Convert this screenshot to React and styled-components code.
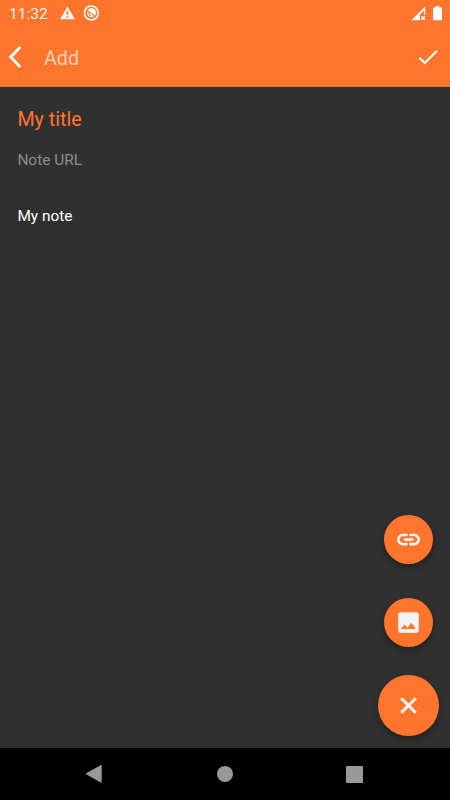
import React from 'react'
import styled, { createGlobalStyle } from "styled-components";

function App() {
  return (
    <>
      <GlobalStyle />
      <Screen>
        <Header>
          <StatusBar>
            <Clock>11:32</Clock>
            <WarningIcon />
            <BlockedIcon />
            <Spacer />
            <SignalIcon />
            <BatteryIcon />
          </StatusBar>
          <Toolbar>
            <IconButton aria-label="Back">
              <svg width="14" height="24" viewBox="0 0 14 24">
                <path d="M12.2 2 2.8 12 12.2 22" fill="none" stroke="#fff" strokeWidth="2.8" />
              </svg>
            </IconButton>
            <Heading>Add</Heading>
            <Spacer />
            <IconButton aria-label="Save">
              <MaterialIcon size={26} d="M9 16.17 4.83 12l-1.42 1.41L9 19 21 7l-1.41-1.41z" />
            </IconButton>
          </Toolbar>
        </Header>

        <Content>
          <Title>My title</Title>
          <NoteUrl>Note URL</NoteUrl>
          <Note>My note</Note>
          <Actions>
            <Fab aria-label="Add link">
              <MaterialIcon
                size={27}
                weight={0.3}
                d="M3.9 12c0-1.71 1.39-3.1 3.1-3.1h4V7H7c-2.76 0-5 2.24-5 5s2.24 5 5 5h4v-1.9H7c-1.71 0-3.1-1.39-3.1-3.1zM8 13h8v-2H8v2zm9-6h-4v1.9h4c1.71 0 3.1 1.39 3.1 3.1s-1.39 3.1-3.1 3.1h-4V17h4c2.76 0 5-2.24 5-5s-2.24-5-5-5z"
              />
            </Fab>
            <Fab aria-label="Add image">
              <MaterialIcon
                size={27}
                weight={0.3}
                color="#f5f5f5"
                d="M21 19V5c0-1.1-.9-2-2-2H5c-1.1 0-2 .9-2 2v14c0 1.1.9 2 2 2h14c1.1 0 2-.9 2-2zM8.5 13.5l2.5 3.01L14.5 12l4.5 6H5l3.5-4.5z"
              />
            </Fab>
            <CloseFab aria-label="Close">
              <MaterialIcon
                size={27}
                weight={0.6}
                d="M19 6.41 17.59 5 12 10.59 6.41 5 5 6.41 10.59 12 5 17.59 6.41 19 12 13.41 17.59 19 19 17.59 13.41 12z"
              />
            </CloseFab>
          </Actions>
        </Content>

        <NavBar>
          <svg width="18" height="20" viewBox="0 0 18 20">
            <path d="M1.2 9.3 15.6 1.2Q16.7.7 16.7 1.8V17.8Q16.7 18.9 15.6 18.4L1.2 10.3Q.3 9.8 1.2 9.3z" fill="#999" />
          </svg>
          <HomeDot />
          <RecentSquare />
        </NavBar>
      </Screen>
    </>
  )
}

function MaterialIcon({ size, d, color = "#fff", weight = 0 }) {
  return (
    <svg width={size} height={size} viewBox="0 0 24 24">
      <path d={d} fill={color} stroke={color} strokeWidth={weight} />
    </svg>
  )
}

function WarningIcon() {
  return (
    <StatusIcon $left={12} width="15" height="14" viewBox="0 0 15 14">
      <path d="M7.5.4 14.8 13.2H.2zM6.7 4.8v4.2h1.6V4.8zm0 5.3v1.6h1.6v-1.6z" fill="#fff" fillRule="evenodd" />
    </StatusIcon>
  )
}

function BlockedIcon() {
  return (
    <StatusIcon $left={8} width="16" height="16" viewBox="0 0 16 16" fill="none" stroke="#fff">
      <circle cx="8.3" cy="8" r="6.9" strokeWidth="1.5" />
      <path d="M5.2 5.1A4.2 4.2 0 0 1 11.9 10.2z" fill="#fff" strokeWidth="0.6" />
      <path d="M5 6.4A4 4 0 0 0 10.2 11.5" strokeWidth="1.3" />
      <path d="M6.7 8.2 10.2 11.5" strokeWidth="1.1" />
    </StatusIcon>
  )
}

function SignalIcon() {
  return (
    <StatusIcon width="15" height="15" viewBox="0 0 15 15">
      <path d="M.4 14.3 14.2.5V8.8H12.9V4.2L9 8.7V14.3z" fill="#fff" />
      <path d="M10.4 10.4 13.8 13.8M13.8 10.4 10.4 13.8" stroke="#fff" strokeWidth="1.5" />
    </StatusIcon>
  )
}

function BatteryIcon() {
  return (
    <StatusIcon $left={7} width="9" height="15" viewBox="0 0 9 15">
      <path d="M2.8 0h3.4v1.4H8Q9 1.4 9 2.4V13.2Q9 14.2 8 14.2H1Q0 14.2 0 13.2V2.4Q0 1.4 1 1.4H2.8z" fill="#fff" />
    </StatusIcon>
  )
}

export default App

const GlobalStyle = createGlobalStyle`
  body {
    margin: 0;
    background: #303030;
  }
  * {
    box-sizing: border-box;
  }
`
const Screen = styled.div`
  display: flex;
  flex-direction: column;
  width: 450px;
  height: 800px;
  overflow: hidden;
  background: #303030;
  font-family: Roboto, sans-serif;
`
const Header = styled.header`
  height: 88px;
  background: #ff752d;
  border-bottom: 1px solid #1f3238;
`
const StatusBar = styled.div`
  display: flex;
  align-items: center;
  height: 26px;
  padding: 0 8.5px 0 9px;
`
const Clock = styled.span`
  width: 39px;
  padding-top: 2px;
  font-size: 15.5px;
  line-height: 26px;
  color: #fff3ec;
`
const StatusIcon = styled.svg`
  margin-left: ${props => props.$left || 0}px;
`
const Spacer = styled.div`
  flex: 1;
`
const Toolbar = styled.div`
  display: flex;
  align-items: center;
  height: 62px;
  padding: 0 9px 0 8px;
`
const IconButton = styled.button`
  display: flex;
  padding: 0;
  border: none;
  background: none;
  cursor: pointer;
`
const Heading = styled.h1`
  margin: 3px 0 0 22px;
  font-size: 19.7px;
  font-weight: 400;
  line-height: 24px;
  color: #ffcfb6;
`
const Content = styled.main`
  position: relative;
  flex: 1;
  padding: 20px 17.4px 0;
`
const Title = styled.div`
  font-size: 19.7px;
  line-height: 24px;
  color: #ff752d;
`
const NoteUrl = styled.div`
  margin-top: 18px;
  font-size: 15.4px;
  line-height: 20px;
  color: #8c8c8c;
`
const Note = styled(NoteUrl)`
  margin-top: 36px;
  color: #fff;
`
const Actions = styled.div`
  position: absolute;
  right: 11px;
  bottom: 11.6px;
  display: flex;
  flex-direction: column;
  align-items: center;
`
const Fab = styled.button`
  display: flex;
  align-items: center;
  justify-content: center;
  width: 49px;
  height: 49px;
  margin-bottom: 34px;
  padding: 0;
  border: none;
  border-radius: 50%;
  background: #ff752d;
  box-shadow: 0 3px 6px rgba(0, 0, 0, 0.35);
  cursor: pointer;

  &:nth-child(2) {
    margin-bottom: 28px;
  }
`
const CloseFab = styled(Fab)`
  width: 61px;
  height: 61px;
  margin-bottom: 0;
`
const NavBar = styled.nav`
  display: flex;
  align-items: center;
  justify-content: space-between;
  height: 52px;
  padding: 0 87px 0 85px;
  background: #000;
`
const HomeDot = styled.div`
  width: 16px;
  height: 16px;
  border-radius: 50%;
  background: #999;
`
const RecentSquare = styled.div`
  width: 17px;
  height: 17px;
  border-radius: 1px;
  background: #999;
`
